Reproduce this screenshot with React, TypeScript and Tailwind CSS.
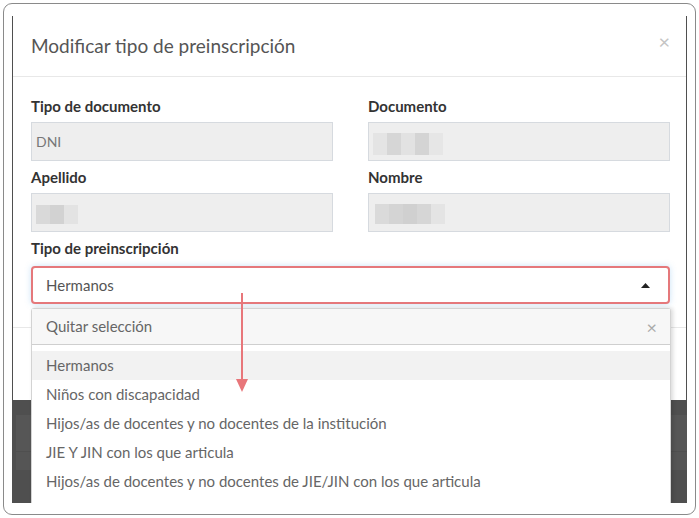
import React from 'react';

const font = { fontFamily: 'Lato, "Open Sans", sans-serif' };

function Blur({ shades }: { shades: string[] }) {
  return (
    <div className="flex h-full">
      {shades.map((c, i) => (
        <div key={i} className="h-full w-[14px]" style={{ backgroundColor: c }} />
      ))}
    </div>
  );
}

function Field({ label, children }: { label: string; children: React.ReactNode }) {
  return (
    <div className="flex flex-col">
      <div className="h-[20px] text-[15px] leading-[20px] font-bold text-[#333]">{label}</div>
      <div className="mt-[6px] h-[39px] w-[302px] border border-[#d6dadf] bg-[#eeeeee] flex items-center pl-[4px]">
        {children}
      </div>
    </div>
  );
}

const options = [
  'Hermanos',
  'Niños con discapacidad',
  'Hijos/as de docentes y no docentes de la institución',
  'JIE Y JIN con los que articula',
  'Hijos/as de docentes y no docentes de JIE/JIN con los que articula',
];

export default function App() {
  return (
    <div className="w-[699px] h-[518px] bg-white p-[3px]" style={font}>
      <div className="h-[512px] rounded-[9px] border border-[#8a8a8a] bg-white px-[8px] pt-[12px]">
        <div className="relative h-[487px] overflow-hidden bg-[#4f4f4f] flex flex-col">
          {/* modal */}
          <div className="mx-[1px] h-[384px] bg-white flex flex-col">
            <div className="h-[61px] border-b border-[#e8e8e8] flex items-center justify-between pl-[18px] pr-[16px] pt-[1px]">
              <span className="text-[19px] text-[#555]">Modificar tipo de preinscripción</span>
              <span className="text-[20px] leading-none text-[#c4c4c4] -mt-[11px]">×</span>
            </div>
            <div className="h-[251px] border-b border-[#e8e8e8] pl-[18px] pt-[19px]">
              <div className="flex gap-[35px]">
                <Field label="Tipo de documento">
                  <span className="text-[14px] text-[#777]">DNI</span>
                </Field>
                <Field label="Documento">
                  <div className="h-[22px] mt-[5px]">
                    <Blur shades={['#e4e4e4', '#d6d6d6', '#e2e2e2', '#d4d4d4', '#e6e6e6']} />
                  </div>
                </Field>
              </div>
              <div className="flex gap-[35px] mt-[6px]">
                <Field label="Apellido">
                  <div className="h-[19px] mt-[4px]">
                    <Blur shades={['#d9d9d9', '#d2d2d2', '#e3e3e3']} />
                  </div>
                </Field>
                <Field label="Nombre">
                  <div className="h-[20px] mt-[2px] pl-[2px]">
                    <Blur shades={['#dadada', '#d4d4d4', '#d0d0d0', '#d6d6d6', '#e4e4e4']} />
                  </div>
                </Field>
              </div>
              <div className="mt-[6px] h-[20px] text-[15px] leading-[20px] font-bold text-[#333]">
                Tipo de preinscripción
              </div>
              <div className="mt-[8px] h-[38px] w-[639px] rounded-[4px] border-2 border-[#e5787b] bg-white flex items-center justify-between pl-[13px] pr-[18px] shadow-[0_0_6px_rgba(102,175,233,0.35)]">
                <span className="text-[15px] text-[#555]">Hermanos</span>
                <svg width="9" height="5" viewBox="0 0 9 5">
                  <path d="M0 5 L4.5 0 L9 5 Z" fill="#222" />
                </svg>
              </div>
            </div>
          </div>

          {/* backdrop page content */}
          <div className="flex-1 flex flex-col pt-[15px]">
            <div className="h-[36px] ml-[4px] bg-[#565656]" />
            <div className="h-[18px] mt-[1px] ml-[4px] bg-[#555555]" />
          </div>

          {/* dropdown */}
          <div className="absolute left-[19px] top-[292px] w-[640px] h-[196px] rounded-t-[3px] border border-[#d3d3d3] bg-white shadow-[2px_0_4px_rgba(0,0,0,0.15)]">
            <div className="h-[36px] bg-[#f7f7f7] border-b border-[#cfcfcf] flex items-center justify-between pl-[14px] pr-[13px]">
              <span className="text-[15px] text-[#666]">Quitar selección</span>
              <span className="text-[18px] leading-none text-[#aaa]">×</span>
            </div>
            <div className="pt-[6px] flex flex-col">
              {options.map((o, i) => (
                <div
                  key={o}
                  className={
                    'h-[29px] flex items-center pl-[14px] text-[15px] text-[#666] ' +
                    (i === 0 ? 'bg-[#f2f2f2] text-[#555]' : '')
                  }
                >
                  {o}
                </div>
              ))}
            </div>
          </div>

          {/* annotation arrow */}
          <svg className="absolute left-[223px] top-[277px]" width="14" height="100" viewBox="0 0 14 100">
            <line x1="7" y1="0" x2="7" y2="90" stroke="#e8767a" strokeWidth="2" />
            <path d="M1 86 L13 86 L7 99 Z" fill="#e8767a" />
          </svg>
        </div>
      </div>
    </div>
  );
}
